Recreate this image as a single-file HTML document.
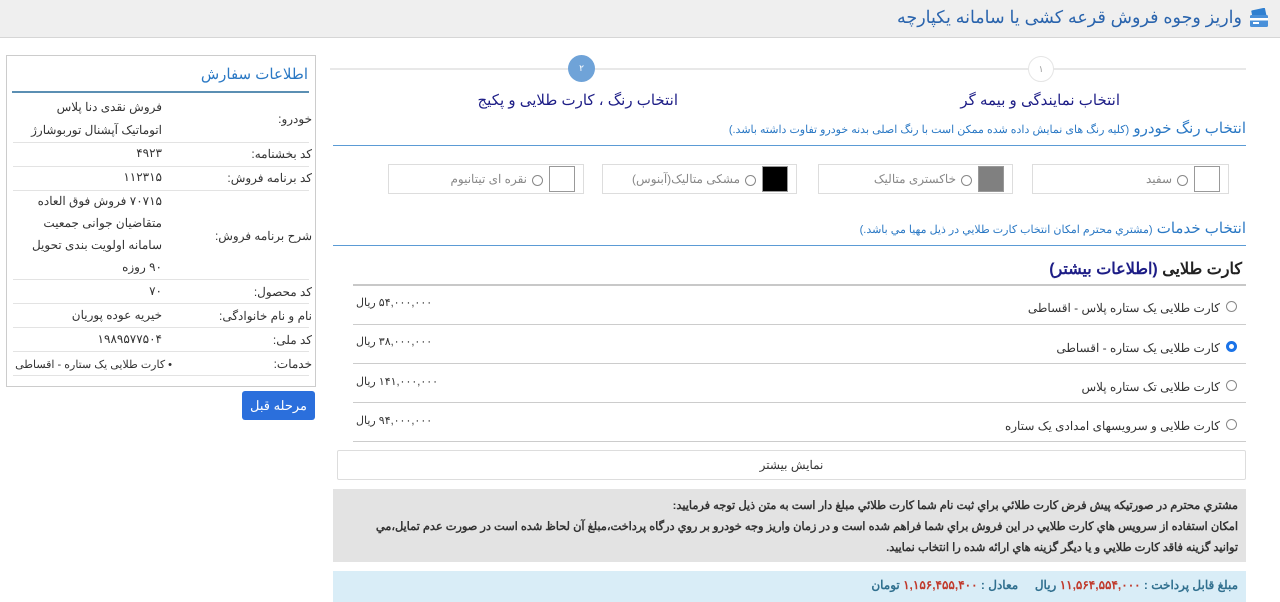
<!DOCTYPE html>
<html><head><meta charset="utf-8"><style>
*{margin:0;padding:0;box-sizing:border-box}
body{width:1280px;height:602px;overflow:hidden;background:#fff;font-family:"Liberation Sans","Noto Sans CJK SC",sans-serif;position:relative;color:#333}
.a{position:absolute;white-space:nowrap;direction:rtl}
.hl{position:absolute;height:1px}
.cb{position:absolute;height:30px;border:1px solid #ddd;background:#fff}
.sw{position:absolute;right:8px;top:1px;width:26px;height:26px;border:1px solid #999}
.rd{position:absolute;width:11px;height:11px;border:1px solid #888;border-radius:50%;background:#fff}
</style></head><body>
<div style="position:absolute;left:0;top:0;width:1280px;height:38px;background:#efefef;border-bottom:1px solid #d6d6d6"></div>
<svg style="position:absolute;left:1248px;top:8px" width="22" height="20" viewBox="0 0 22 20"><rect x="4" y="1" width="14" height="9" rx="1" fill="#2f7fd0" transform="rotate(-12 11 6)"/><rect x="2" y="7" width="18" height="12" rx="1.5" fill="#4a90d9"/><rect x="2" y="10" width="18" height="2.5" fill="#fff"/><rect x="5" y="14" width="6" height="2" fill="#fff"/></svg>
<div class="a" style="right:38px;top:7px;font-size:17.5px;color:#2a64ad">واریز وجوه فروش قرعه کشی یا سامانه یکپارچه</div>

<!-- sidebar -->
<div style="position:absolute;left:6px;top:55px;width:310px;height:332px;border:1px solid #ccc"></div>
<div class="a" style="right:972px;top:65px;font-size:15px;color:#2a78c4">اطلاعات سفارش</div>
<div class="hl" style="left:12px;width:297px;top:91px;height:2px;background:#5b8fb3"></div>
<div style="font-size:12px;color:#333">
<div class="a" style="right:968px;top:112px">خودرو:</div>
<div class="a" style="right:1118px;top:100px">فروش نقدی دنا پلاس</div>
<div class="a" style="right:1118px;top:123px">اتوماتیک آپشنال توربوشارژ</div>
<div class="hl" style="left:13px;width:296px;top:142px;background:#e3e3e3"></div>
<div class="a" style="right:968px;top:147px">کد بخشنامه:</div>
<div class="a" style="right:1118px;top:146px">۴۹۲۳</div>
<div class="hl" style="left:13px;width:296px;top:166px;background:#e3e3e3"></div>
<div class="a" style="right:968px;top:171px">کد برنامه فروش:</div>
<div class="a" style="right:1118px;top:170px">۱۱۲۳۱۵</div>
<div class="hl" style="left:13px;width:296px;top:190px;background:#e3e3e3"></div>
<div class="a" style="right:968px;top:229px">شرح برنامه فروش:</div>
<div class="a" style="right:1118px;top:194px">۷۰۷۱۵ فروش فوق العاده</div>
<div class="a" style="right:1118px;top:216px">متقاضیان جوانی جمعیت</div>
<div class="a" style="right:1118px;top:238px">سامانه اولویت بندی تحویل</div>
<div class="a" style="right:1118px;top:260px">۹۰ روزه</div>
<div class="hl" style="left:13px;width:296px;top:279px;background:#e3e3e3"></div>
<div class="a" style="right:968px;top:285px">کد محصول:</div>
<div class="a" style="right:1118px;top:284px">۷۰</div>
<div class="hl" style="left:13px;width:296px;top:303px;background:#e3e3e3"></div>
<div class="a" style="right:968px;top:309px">نام و نام خانوادگی:</div>
<div class="a" style="right:1118px;top:308px">خیریه عوده پوریان</div>
<div class="hl" style="left:13px;width:296px;top:327px;background:#e3e3e3"></div>
<div class="a" style="right:968px;top:333px">کد ملی:</div>
<div class="a" style="right:1118px;top:332px">۱۹۸۹۵۷۷۵۰۴</div>
<div class="hl" style="left:13px;width:296px;top:351px;background:#e3e3e3"></div>
<div class="a" style="right:968px;top:357px">خدمات:</div>
<div class="a" style="right:1108px;top:358px;font-size:11px">• کارت طلایی یک ستاره - اقساطی</div>
<div class="hl" style="left:13px;width:296px;top:375px;background:#e3e3e3"></div>
</div>
<div class="a" style="left:242px;top:391px;width:73px;height:29px;background:#2b6fdc;border-radius:3px;color:#fff;font-size:13px;text-align:center;line-height:29px">مرحله قبل</div>

<!-- stepper -->
<div class="hl" style="left:330px;width:916px;top:68px;height:2px;background:#e8e8e8"></div>
<div style="position:absolute;left:568px;top:55px;width:27px;height:27px;border-radius:50%;background:#6fa3d8;color:#fff;font-size:9px;text-align:center;line-height:27px">۲</div>
<div style="position:absolute;left:1028px;top:56px;width:26px;height:26px;border-radius:50%;background:#fff;border:1px solid #e5e5e5;color:#999;font-size:9px;text-align:center;line-height:24px">۱</div>
<div class="a" style="right:602px;top:91px;font-size:15px;color:#1d1d86">انتخاب رنگ ، کارت طلایی و پکیج</div>
<div class="a" style="right:160px;top:91px;font-size:15px;color:#1d1d86">انتخاب نمایندگی و بیمه گر</div>

<div class="a" style="right:34px;top:119px;font-size:15px;color:#2a78c4">انتخاب رنگ خودرو <span style="font-size:11px">(کلیه رنگ های نمایش داده شده ممکن است با رنگ اصلی بدنه خودرو تفاوت داشته باشد.)</span></div>
<div class="hl" style="left:333px;width:913px;top:145px;background:#5b9bd5"></div>

<div class="cb" style="left:1032px;width:197px;top:164px"><div class="sw" style="background:#fff"></div><div class="rd" style="right:40px;top:10px"></div><div class="a" style="right:56px;top:7px;font-size:12px;color:#888">سفید</div></div>
<div class="cb" style="left:818px;width:195px;top:164px"><div class="sw" style="background:#808080"></div><div class="rd" style="right:40px;top:10px"></div><div class="a" style="right:56px;top:7px;font-size:12px;color:#888">خاکستری متالیک</div></div>
<div class="cb" style="left:602px;width:195px;top:164px"><div class="sw" style="background:#000"></div><div class="rd" style="right:40px;top:10px"></div><div class="a" style="right:56px;top:7px;font-size:12px;color:#888">مشکی متالیک(آبنوس)</div></div>
<div class="cb" style="left:388px;width:196px;top:164px"><div class="sw" style="background:#fff"></div><div class="rd" style="right:40px;top:10px"></div><div class="a" style="right:56px;top:7px;font-size:12px;color:#888">نقره ای تیتانیوم</div></div>

<div class="a" style="right:34px;top:219px;font-size:15px;color:#2a78c4">انتخاب خدمات <span style="font-size:11px">(مشتري محترم امكان انتخاب كارت طلايي در ذيل مهيا مي باشد.)</span></div>
<div class="hl" style="left:333px;width:913px;top:245px;background:#5b9bd5"></div>

<div class="a" style="right:38px;top:259px;font-size:16px;font-weight:bold;color:#222">کارت طلایی <span style="color:#1d1d86">(اطلاعات بیشتر)</span></div>
<div class="hl" style="left:353px;width:893px;top:284px;height:2px;background:#c8c8c8"></div>

<div style="font-size:12px;color:#333">
<div class="rd" style="left:1226px;top:301px"></div><div class="a" style="right:60px;top:301px">کارت طلایی یک ستاره پلاس - اقساطی</div><div class="a" style="left:356px;top:296px;font-size:11px">۵۴,۰۰۰,۰۰۰ ریال</div>
<div class="hl" style="left:353px;width:893px;top:324px;background:#ccc"></div>
<div class="rd" style="left:1226px;top:341px;border:3px solid #1a73e8"></div><div class="a" style="right:60px;top:341px">کارت طلایی یک ستاره - اقساطی</div><div class="a" style="left:356px;top:335px;font-size:11px">۳۸,۰۰۰,۰۰۰ ریال</div>
<div class="hl" style="left:353px;width:893px;top:363px;background:#ccc"></div>
<div class="rd" style="left:1226px;top:380px"></div><div class="a" style="right:60px;top:380px">کارت طلایی تک ستاره پلاس</div><div class="a" style="left:356px;top:375px;font-size:11px">۱۴۱,۰۰۰,۰۰۰ ریال</div>
<div class="hl" style="left:353px;width:893px;top:402px;background:#ccc"></div>
<div class="rd" style="left:1226px;top:419px"></div><div class="a" style="right:60px;top:419px">کارت طلایی و سرویسهای امدادی یک ستاره</div><div class="a" style="left:356px;top:414px;font-size:11px">۹۴,۰۰۰,۰۰۰ ریال</div>
<div class="hl" style="left:353px;width:893px;top:441px;background:#ccc"></div>
</div>
<div style="position:absolute;left:337px;top:450px;width:909px;height:30px;border:1px solid #ddd;border-radius:2px;text-align:center;line-height:28px;font-size:12px;color:#333">نمایش بیشتر</div>

<div style="position:absolute;left:333px;top:489px;width:913px;height:73px;background:#e3e3e3"></div>
<div class="a" style="right:42px;top:496px;font-size:11.3px;font-weight:bold;color:#333;line-height:21px">مشتري محترم در صورتيكه پيش فرض كارت طلائي براي ثبت نام شما كارت طلائي مبلغ دار است به متن ذيل توجه فرماييد:<br>امكان استفاده از سرويس هاي كارت طلايي در اين فروش براي شما فراهم شده است و در زمان واريز وجه خودرو بر روي درگاه پرداخت،مبلغ آن لحاظ شده است در صورت عدم تمايل،مي<br>توانيد گزينه فاقد كارت طلايي و يا ديگر گزينه هاي ارائه شده را انتخاب نماييد.</div>

<div style="position:absolute;left:333px;top:571px;width:913px;height:31px;background:#d9edf7"></div>
<div class="a" style="right:42px;top:578px;font-size:12px;font-weight:bold;color:#31708f">مبلغ قابل پرداخت : <span style="color:#c0392b">۱۱,۵۶۴,۵۵۴,۰۰۰</span> ریال &nbsp;&nbsp;&nbsp; معادل : <span style="color:#c0392b">۱,۱۵۶,۴۵۵,۴۰۰</span> تومان</div>
</body></html>
